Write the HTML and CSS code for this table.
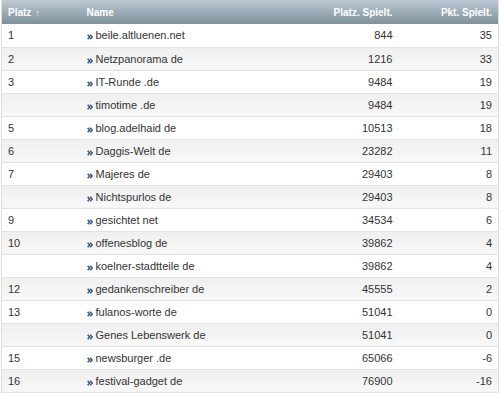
FILE: index.html
```html
<!DOCTYPE html>
<html lang="de">
<head>
    <meta charset="UTF-8">
    <title>Rangliste</title>
    <link rel="stylesheet" href="styles.css">
</head>
<body>

<table class="ranking">
    <thead>
        <tr>
            <th class="col-place">Platz <span class="sort">&#8593;</span></th>
            <th class="col-name">Name</th>
            <th class="col-num">Platz. Spielt.</th>
            <th class="col-pts">Pkt. Spielt.</th>
        </tr>
    </thead>
    <tbody id="rows"></tbody>
</table>

<script>
    // Rangliste: Platz, Name, Platz. Spielt., Pkt. Spielt.
    const rows = [
        ['1', 'beile.altluenen.net', 844, 35],
        ['2', 'Netzpanorama de', 1216, 33],
        ['3', 'IT-Runde .de', 9484, 19],
        ['', 'timotime .de', 9484, 19],
        ['5', 'blog.adelhaid de', 10513, 18],
        ['6', 'Daggis-Welt de', 23282, 11],
        ['7', 'Majeres de', 29403, 8],
        ['', 'Nichtspurlos de', 29403, 8],
        ['9', 'gesichtet net', 34534, 6],
        ['10', 'offenesblog de', 39862, 4],
        ['', 'koelner-stadtteile de', 39862, 4],
        ['12', 'gedankenschreiber de', 45555, 2],
        ['13', 'fulanos-worte de', 51041, 0],
        ['', 'Genes Lebenswerk de', 51041, 0],
        ['15', 'newsburger .de', 65066, -6],
        ['16', 'festival-gadget de', 76900, -16]
    ];
    const icon = '<svg class="go" width="6" height="6" viewBox="0 0 6 6"><polyline points="0.7,0.7 2.6,3 0.7,5.3" /><polyline points="3.2,0.7 5.1,3 3.2,5.3" /></svg>';
    document.getElementById('rows').innerHTML = rows.map(r =>
        '<tr><td class="col-place">' + r[0] + '</td>' +
        '<td class="col-name">' + icon + r[1] + '</td>' +
        '<td class="col-num">' + r[2] + '</td>' +
        '<td class="col-pts">' + r[3] + '</td></tr>'
    ).join('');
</script>

</body>
</html>
```

FILE: styles.css
```css
body {
    margin: 0;
    padding: 0;
    background: #fff;
    font-family: "Liberation Sans", Arial, sans-serif;
    font-size: 11px;
    color: #333;
}
.ranking {
    width: 498px;
    margin-left: 1px;
    border-collapse: collapse;
    border: 1px solid #dcdcdc;
    border-top: none;
}
.ranking th {
    height: 24px;
    padding: 0 6px;
    background: linear-gradient(to bottom, #bccad3, #7e909c);
    color: #fff;
    font-size: 10px;
    font-weight: bold;
    text-align: left;
    box-sizing: border-box;
}
.ranking td {
    height: 23px;
    padding: 0 6px;
    border-bottom: 1px solid #e2e2e2;
    box-sizing: border-box;
}
.ranking tbody tr:nth-child(even) td {
    background: linear-gradient(to bottom, #efefef, #f8f8f8);
}
.col-place {
    width: 79px;
}
.col-name {
    width: 218px;
}
.ranking .col-num,
.ranking .col-pts {
    text-align: right;
}
.col-num {
    width: 100px;
}
.sort {
    margin-left: 1px;
    font-size: 9px;
    color: #e8eef2;
}
.go {
    margin-right: 3px;
    vertical-align: -1px;
}
.go polyline {
    fill: none;
    stroke: #3d5f80;
    stroke-width: 1.6;
}
```
